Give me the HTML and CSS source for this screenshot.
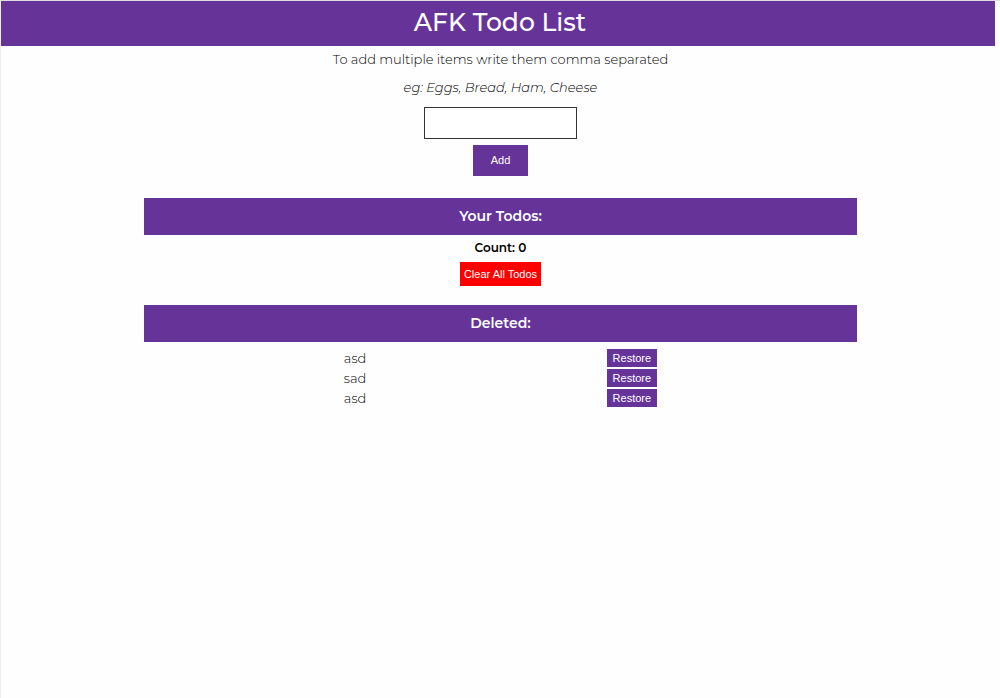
FILE: index.html
```html
<!DOCTYPE html>
<html lang="en">
<head>
<meta charset="utf-8">
<meta name="viewport" content="width=device-width, initial-scale=1">
<title>AFK Todo List</title>
<link rel="stylesheet" href="styles.css">
</head>
<body>
<header class="header"><h1 class="title">AFK Todo List</h1></header>
<main class="main">
  <form class="add-form">
    <label class="hint" for="items">To add multiple items write them comma separated</label>
    <p class="example">eg: Eggs, Bread, Ham, Cheese</p>
    <input class="field" id="items" type="text">
    <button class="button add" type="button">Add</button>
  </form>
  <section class="section">
    <h2 class="bar">Your Todos:</h2>
    <p class="count">Count: 0</p>
    <button class="button clear" type="button">Clear All Todos</button>
  </section>
  <section class="section">
    <h2 class="bar">Deleted:</h2>
    <ul class="list">
      <li class="item"><span>asd</span><button class="button restore" type="button">Restore</button></li>
      <li class="item"><span>sad</span><button class="button restore" type="button">Restore</button></li>
      <li class="item"><span>asd</span><button class="button restore" type="button">Restore</button></li>
    </ul>
  </section>
</main>
</body>
</html>
```
FILE: styles.css
```css
* {
  box-sizing: border-box;
  margin: 0;
  padding: 0;
}

html {
  min-height: 100%;
  border-top: 1px solid #dddde3;
  border-left: 1px solid #eeeeee;
  background: #fefefe;
}

body {
  margin-right: 5px;
  font-family: Montserrat, Inter, "Open Sans", sans-serif;
  font-size: 13px;
  line-height: 20px;
  font-weight: 300;
  color: #000000;
}

.header {
  padding: 5px 16px 8px 20px;
  background: #663399;
  color: #ffffff;
  text-align: center;
}

.title {
  font-size: 25px;
  line-height: 32px;
  font-weight: 500;
}

.main,
.add-form,
.section {
  display: flex;
  flex-direction: column;
  align-items: center;
}

.main {
  padding-left: 5px;
}

.add-form {
  padding-top: 3px;
}

.example {
  margin: 8px 0 10px;
  font-style: italic;
}

.field {
  width: 153px;
  height: 32px;
  padding: 0 8px;
  border: 1px solid #333333;
  background: #ffffff;
  font: inherit;
}

.button {
  border: 0;
  background: #663399;
  color: #ffffff;
  font-family: "Liberation Sans", Arial, sans-serif;
  font-size: 11px;
  line-height: 18px;
}

.add {
  margin-top: 6px;
  padding: 6px 18px;
  line-height: 19px;
}

.section {
  width: 72%;
  margin-top: 22px;
}

.section + .section {
  margin-top: 19px;
}

.bar {
  width: 100%;
  padding: 8px;
  background: #663399;
  color: #ffffff;
  font-size: 14px;
  line-height: 21px;
  font-weight: 600;
  text-align: center;
}

.count {
  margin: 3px 0 4px;
  font-size: 12px;
  font-weight: 600;
}

.clear {
  padding: 3px 4px;
  background: #ff0000;
}

.list {
  display: grid;
  gap: 2px;
  width: 44%;
  margin-top: 7px;
  list-style: none;
}

.item {
  display: flex;
  align-items: center;
  justify-content: space-between;
  line-height: 18px;
}

.restore {
  padding: 0 6px;
}
```
